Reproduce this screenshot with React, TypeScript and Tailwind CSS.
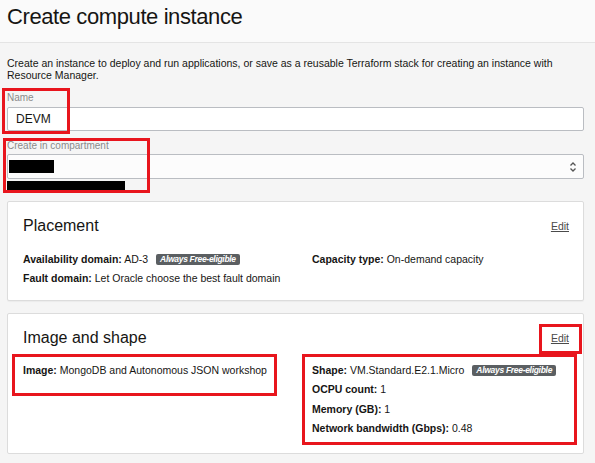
import React from "react";

const Badge = () => (
  <span className="inline-block bg-[#5b5f62] text-white italic font-bold text-[8.5px] leading-[11px] px-[4px] rounded-[2px] tracking-[-0.3px] whitespace-nowrap">
    Always Free-eligible
  </span>
);

const RedBox = ({ className }: { className: string }) => (
  <div className={"absolute border-[3px] border-[#e8151d] pointer-events-none " + className} />
);

export default function App() {
  return (
    <div
      className="relative w-[595px] h-[463px] bg-[#f5f5f5] text-[#161513] overflow-hidden"
      style={{ fontFamily: '"Liberation Sans", Arial, sans-serif' }}
    >
      <div className="h-[43px] bg-[#fafafa] border-b border-[#e4e4e4] pl-[7px] pt-[2px]">
        <h1 className="text-[22px] leading-[29px] font-normal tracking-[-0.4px] text-[#161513]">Create compute instance</h1>
      </div>
      <div className="px-[7px] pt-[14px]">
        <p className="text-[10.5px] leading-[12px] text-[#161513] pr-[20px]">
          Create an instance to deploy and run applications, or save as a reusable Terraform stack for creating an instance with Resource Manager.
        </p>
        <div className="mt-[11px] text-[10px] leading-[12px] text-[#8a8a8a]">Name</div>
        <div className="mt-[3px] w-[577px] h-[24px] bg-white border border-[#babdc2] rounded-[2px] flex items-center pl-[8px] text-[12px]">
          DEVM
        </div>
        <div className="mt-[9px] text-[10px] leading-[12px] text-[#8a8a8a]">Create in compartment</div>
        <div className="mt-[2px] w-[577px] h-[25px] bg-[#fcfcfc] border border-[#babdc2] rounded-[2px] flex items-center justify-between pl-[1px] pr-[6px]">
          <div className="w-[45px] h-[13px] bg-black" />
          <svg width="8" height="12" viewBox="0 0 8 12" fill="none" stroke="#555" strokeWidth="1.3">
            <path d="M1.5 4.5 L4 2 L6.5 4.5" />
            <path d="M1.5 7.5 L4 10 L6.5 7.5" />
          </svg>
        </div>
        <div className="mt-[2px] w-[118px] h-[9px] bg-black" />

        <div className="mt-[11px] w-[577px] h-[100px] bg-white border border-[#dcdcdc] rounded-[2px] shadow-[0_1px_1px_rgba(0,0,0,0.04)] pl-[15px] pr-[14px] pt-[12px]">
          <div className="flex justify-between items-start">
            <h2 className="text-[16px] leading-[24px] font-normal text-[#161513]">Placement</h2>
            <a className="text-[10.5px] underline text-[#4a4a4a] mt-[5px]">Edit</a>
          </div>
          <div className="mt-[12px] flex text-[10.5px] leading-[19px]">
            <div className="w-[289px]">
              <div className="flex items-center gap-[8px]">
                <span><b>Availability domain:</b> AD-3</span>
                <Badge />
              </div>
              <div><b>Fault domain:</b> Let Oracle choose the best fault domain</div>
            </div>
            <div className="flex-1 whitespace-nowrap">
              <b>Capacity type:</b> On-demand capacity
            </div>
          </div>
        </div>

        <div className="mt-[12px] w-[577px] h-[141px] bg-white border border-[#dcdcdc] rounded-[2px] pl-[15px] pr-[14px] pt-[12px]">
          <div className="flex justify-between items-start">
            <h2 className="text-[16px] leading-[24px] font-normal text-[#161513]">Image and shape</h2>
            <a className="text-[10.5px] underline text-[#4a4a4a] mt-[5px]">Edit</a>
          </div>
          <div className="mt-[11px] flex text-[10.5px] leading-[19.3px]">
            <div className="w-[289px]">
              <b>Image:</b> MongoDB and Autonomous JSON workshop
            </div>
            <div className="flex-1 whitespace-nowrap">
              <div className="flex items-center gap-[8px]">
                <span><b>Shape:</b> VM.Standard.E2.1.Micro</span>
                <Badge />
              </div>
              <div><b>OCPU count:</b> 1</div>
              <div><b>Memory (GB):</b> 1</div>
              <div><b>Network bandwidth (Gbps):</b> 0.48</div>
            </div>
          </div>
        </div>
      </div>

      <RedBox className="left-[2px] top-[88px] w-[68px] h-[46px]" />
      <RedBox className="left-[3px] top-[138px] w-[147px] h-[55px]" />
      <RedBox className="left-[12px] top-[354px] w-[265px] h-[42px]" />
      <RedBox className="left-[539px] top-[324px] w-[43px] h-[30px]" />
      <RedBox className="left-[302px] top-[354px] w-[275px] h-[91px]" />
    </div>
  );
}
